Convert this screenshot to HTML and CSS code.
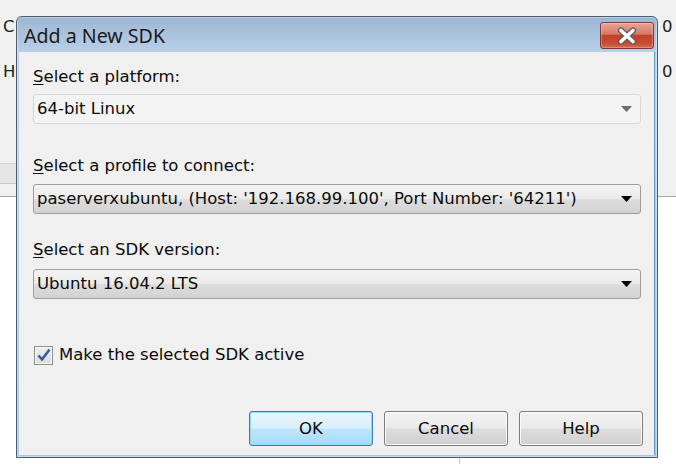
FILE: index.html
```html
<!DOCTYPE html>
<html>
<head>
<meta charset="utf-8">
<link rel="stylesheet" href="styles.css">
</head>
<body>
<div class="backdrop">
  <div class="top-band">
    <div class="side-col left-col">
      <span class="bg-text">C</span>
      <span class="bg-text">H</span>
      <div class="bg-bar"></div>
    </div>
    <div class="side-col right-col">
      <span class="bg-text">0</span>
      <span class="bg-text">0</span>
    </div>
  </div>
  <div class="bottom-area"><div class="divider"></div></div>
</div>

<div class="dialog">
  <div class="titlebar">
    <span class="title">Add a New SDK</span>
    <div class="close-btn">
      <svg width="22" height="18" viewBox="0 0 22 18">
        <path d="M5 3.5 L17 14.5 M17 3.5 L5 14.5" stroke="#5a5a5a" stroke-width="6" stroke-linecap="round"/>
        <path d="M5 3.5 L17 14.5 M17 3.5 L5 14.5" stroke="#ffffff" stroke-width="3.6" stroke-linecap="round"/>
      </svg>
    </div>
  </div>
  <div class="body">
    <div class="label l1"><u>S</u>elect a platform:</div>
    <div class="combo flat c1">
      <span class="combo-text">64-bit Linux</span>
      <svg class="arrow" width="11" height="6" viewBox="0 0 11 6"><path d="M0 0 H11 L5.5 6 Z" fill="#6d6d6d"/></svg>
    </div>

    <div class="label l2"><u>S</u>elect a profile to connect:</div>
    <div class="combo raised c2">
      <span class="combo-text">paserverxubuntu, (Host: '192.168.99.100', Port Number: '64211')</span>
      <svg class="arrow" width="11" height="6" viewBox="0 0 11 6"><path d="M0 0 H11 L5.5 6 Z" fill="#000"/></svg>
    </div>

    <div class="label l3"><u>S</u>elect an SDK version:</div>
    <div class="combo raised c3">
      <span class="combo-text">Ubuntu 16.04.2 LTS</span>
      <svg class="arrow" width="11" height="6" viewBox="0 0 11 6"><path d="M0 0 H11 L5.5 6 Z" fill="#000"/></svg>
    </div>

    <div class="check-row">
      <div class="checkbox">
        <svg width="16" height="16" viewBox="0 0 16 16"><path d="M2.5 8.5 L6 12.5 L13.5 2.5" fill="none" stroke="#2f5f9e" stroke-width="2.6" stroke-linejoin="round"/></svg>
      </div>
      <span class="check-label">Make the selected SDK active</span>
    </div>

    <div class="buttons">
      <div class="btn default">OK</div>
      <div class="btn">Cancel</div>
      <div class="btn">Help</div>
    </div>
  </div>
</div>
</body>
</html>
```

FILE: styles.css
```css
html, body {
  margin: 0;
  padding: 0;
}
body {
  width: 676px;
  height: 464px;
  overflow: hidden;
  position: relative;
  background: #ffffff;
  font-family: "DejaVu Sans", sans-serif;
  font-size: 16.5px;
  color: #0a0a0a;
}

/* background window */
.backdrop {
  display: flex;
  flex-direction: column;
  height: 464px;
}
.top-band {
  height: 196px;
  background: #f0f0f0;
  border-bottom: 1px solid #a8a8a8;
  display: flex;
  justify-content: space-between;
}
.side-col {
  display: flex;
  flex-direction: column;
  padding-top: 17px;
}
.left-col {
  width: 16px;
  padding-left: 3px;
}
.right-col {
  width: 14px;
}
.bg-text {
  line-height: 20px;
  height: 20px;
  margin-bottom: 25px;
  color: #222;
}
.bg-bar {
  margin-top: 56px;
  margin-left: -3px;
  width: 16px;
  height: 19px;
  background: #e6e6e6;
  border-top: 1px solid #d0d0d0;
  border-bottom: 1px solid #c8c8c8;
}
.bottom-area {
  flex: 1;
  display: flex;
}
.divider {
  margin-left: 459px;
  width: 1px;
  background: #c8c8c8;
}

/* dialog window */
.dialog {
  position: absolute;
  left: 16px;
  top: 16px;
  width: 640px;
  height: 440px;
  border: 1px solid #4e5b6a;
  border-radius: 6px 6px 0 0;
  background: linear-gradient(#9cb6d3, #bcd3ea 40px, #a9c6e2);
  display: flex;
  flex-direction: column;
  box-shadow: inset 0 0 0 1px rgba(255,255,255,0.35);
}
.titlebar {
  height: 35px;
  display: flex;
  align-items: center;
  justify-content: space-between;
  padding: 0 3px 0 7px;
}
.title {
  font-family: "Noto Sans", sans-serif;
  font-size: 19.6px;
  color: #1a1a1a;
  margin-top: 2px;
}
.close-btn {
  width: 52px;
  height: 25px;
  border: 1px solid #7d3a30;
  border-radius: 3px;
  background: linear-gradient(#e6a596, #d57a67 45%, #c2402a 50%, #c94a33 80%, #d66a50);
  box-shadow: inset 0 0 0 1px rgba(255,255,255,0.25);
  display: flex;
  align-items: center;
  justify-content: center;
  margin-top: 2px;
}
.body {
  flex: 1;
  margin: 0 2px 2px 2px;
  background: #f0f0f0;
  border-right: 1px solid #5a9ccc;
  display: flex;
  flex-direction: column;
  padding: 15px 13px 0 14px;
}
.label {
  line-height: 20px;
  height: 20px;
  white-space: nowrap;
}
.label u {
  text-decoration-thickness: 1px;
  text-underline-offset: 2px;
}
.l2 { margin-top: 32px; }
.l3 { margin-top: 26px; }

.combo {
  height: 28px;
  border-radius: 3px;
  display: flex;
  align-items: center;
  justify-content: space-between;
  padding: 0 8px 0 3px;
}
.combo-text {
  white-space: nowrap;
  line-height: 20px;
}
.c1 { margin-top: 7px; }
.c2 { margin-top: 8px; }
.c3 { margin-top: 9px; }
.flat {
  background: #f4f4f4;
  border: 1px solid #d6d6d6;
}
.raised {
  background: linear-gradient(#f3f3f3, #ebebeb 48%, #dddddd 52%, #d2d2d2);
  border: 1px solid #9e9e9e;
}
.arrow {
  flex: none;
}

.check-row {
  margin-top: 46px;
  height: 20px;
  display: flex;
  align-items: center;
  gap: 6px;
}
.checkbox {
  width: 19px;
  height: 19px;
  box-sizing: border-box;
  border: 1px solid #8e8f8f;
  background: linear-gradient(#eeeeee, #dcdcdc);
  box-shadow: inset 0 0 0 1px #f6f6f6;
  display: flex;
  align-items: center;
  justify-content: center;
  margin-left: 1px;
}
.check-label {
  line-height: 20px;
}

.buttons {
  margin-top: 46px;
  margin-right: -2px;
  display: flex;
  justify-content: flex-end;
  gap: 11px;
}
.btn {
  width: 122px;
  height: 33px;
  border: 1px solid #7c7c7c;
  border-radius: 3px;
  background: linear-gradient(#f2f2f2, #ebebeb 48%, #dddddd 52%, #cfcfcf);
  box-shadow: inset 0 0 0 1px #fbfbfb;
  display: flex;
  align-items: center;
  justify-content: center;
  line-height: 20px;
}
.btn.default {
  border-color: #3c7fb1;
  background: linear-gradient(#eaf6fd, #d9f0fc 48%, #bee6fd 52%, #a7d9f5);
  box-shadow: inset 0 0 0 1px #94d6f6;
}
```
